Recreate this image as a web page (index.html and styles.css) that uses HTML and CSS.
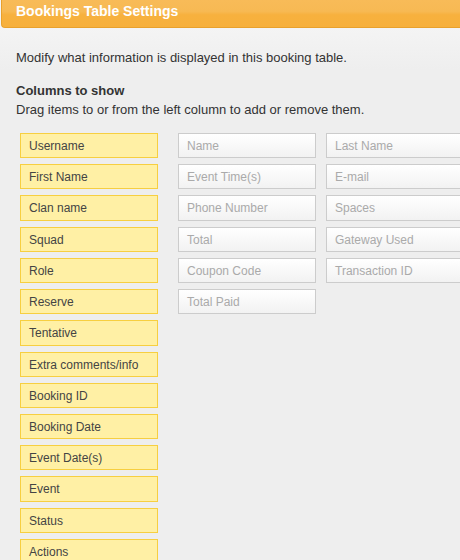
FILE: index.html
```html
<!DOCTYPE html>
<html>
<head>
<meta charset="utf-8">
<link rel="stylesheet" href="styles.css">
</head>
<body>
<div class="header">Bookings Table Settings</div>
<div class="content">
  <p class="intro">Modify what information is displayed in this booking table.</p>
  <h4 class="title">Columns to show</h4>
  <p class="hint">Drag items to or from the left column to add or remove them.</p>
  <div class="columns">
    <ul class="active">
      <li>Username</li>
      <li>First Name</li>
      <li>Clan name</li>
      <li>Squad</li>
      <li>Role</li>
      <li>Reserve</li>
      <li>Tentative</li>
      <li>Extra comments/info</li>
      <li>Booking ID</li>
      <li>Booking Date</li>
      <li>Event Date(s)</li>
      <li>Event</li>
      <li>Status</li>
      <li>Actions</li>
    </ul>
    <ul class="inactive">
      <li>Name</li>
      <li>Last Name</li>
      <li>Event Time(s)</li>
      <li>E-mail</li>
      <li>Phone Number</li>
      <li>Spaces</li>
      <li>Total</li>
      <li>Gateway Used</li>
      <li>Coupon Code</li>
      <li>Transaction ID</li>
      <li>Total Paid</li>
    </ul>
  </div>
</div>
</body>
</html>
```
FILE: styles.css
```css
html, body {
  margin: 0;
  padding: 0;
  overflow: hidden;
}
body {
  width: 460px;
  height: 560px;
  font-family: "Liberation Sans", Arial, sans-serif;
  color: #333;
  background: linear-gradient(#f4f4f4 28px, #eeeeee 70px, #eeeeee);
}
.header {
  margin-left: 1px;
  box-sizing: border-box;
  height: 28px;
  padding-left: 14px;
  line-height: 23px;
  font-size: 14px;
  font-weight: bold;
  color: #fff;
  border-left: 1px solid #e9a12c;
  border-bottom: 1px solid #e9a12c;
  border-bottom-left-radius: 4px;
  background: linear-gradient(#f8bb58 0%, #f7b953 42%, #f7b13e 55%, #f7b03c 100%);
}
.content {
  padding: 0 16px;
}
.intro {
  margin: 21px 0 0;
  font-size: 13px;
  line-height: 18px;
}
.title {
  margin: 15px 0 0;
  font-size: 13px;
  line-height: 18px;
  font-weight: bold;
}
.hint {
  margin: 1px 0 0;
  font-size: 13px;
  line-height: 18px;
}
.columns {
  display: flex;
  align-items: flex-start;
  gap: 20px;
  margin-top: 14px;
  padding-left: 4px;
}
.columns ul {
  list-style: none;
  margin: 0;
  padding: 0;
}
.columns li {
  box-sizing: border-box;
  width: 138px;
  height: 25.23px;
  padding-left: 8px;
  font-size: 12px;
  line-height: 24px;
  white-space: nowrap;
}
.active {
  display: flex;
  flex-direction: column;
  gap: 6px;
}
.active li {
  background: #fff0a5;
  border: 1px solid #f7cf40;
  color: #444;
}
.inactive {
  display: grid;
  grid-template-columns: 138px 138px;
  column-gap: 10px;
  row-gap: 6px;
}
.inactive li {
  background: linear-gradient(#ffffff, #f2f2f2);
  border: 1px solid #cccccc;
  color: #aaa;
}
```
